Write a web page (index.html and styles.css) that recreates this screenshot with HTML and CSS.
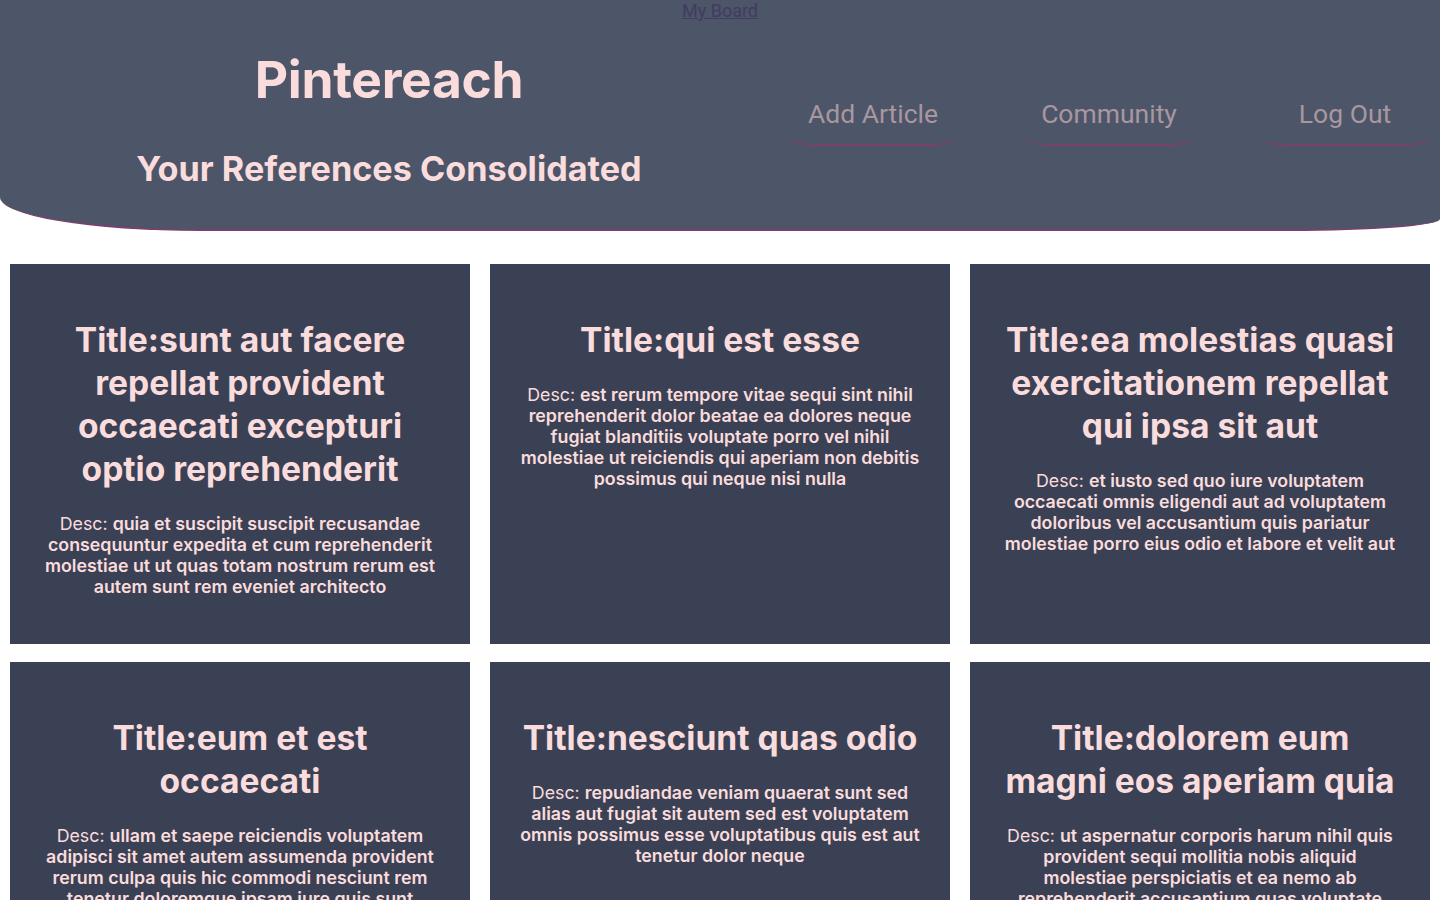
FILE: index.html
```html
<!DOCTYPE html>
<html lang="en">
<head>
<meta charset="utf-8">
<title>Pintereach</title>
<link rel="stylesheet" href="styles.css">
</head>
<body>
<header class="header">
  <a class="board-link" href="#">My Board</a>
  <div class="header-row">
    <div class="brand">
      <h1 class="brand-title">Pintereach</h1>
      <h2 class="brand-sub">Your References Consolidated</h2>
    </div>
    <nav class="nav">
      <a class="nav-link" href="#">Add Article</a>
      <a class="nav-link" href="#">Community</a>
      <a class="nav-link" href="#">Log Out</a>
    </nav>
  </div>
</header>
<main class="grid">
  <article class="card">
    <h3 class="card-title">Title:sunt aut facere repellat provident occaecati excepturi optio reprehenderit</h3>
    <p class="card-desc">Desc: <b>quia et suscipit suscipit recusandae consequuntur expedita et cum reprehenderit molestiae ut ut quas totam nostrum rerum est autem sunt rem eveniet architecto</b></p>
  </article>
  <article class="card">
    <h3 class="card-title">Title:qui est esse</h3>
    <p class="card-desc">Desc: <b>est rerum tempore vitae sequi sint nihil reprehenderit dolor beatae ea dolores neque fugiat blanditiis voluptate porro vel nihil molestiae ut reiciendis qui aperiam non debitis possimus qui neque nisi nulla</b></p>
  </article>
  <article class="card">
    <h3 class="card-title">Title:ea molestias quasi exercitationem repellat qui ipsa sit aut</h3>
    <p class="card-desc">Desc: <b>et iusto sed quo iure voluptatem occaecati omnis eligendi aut ad voluptatem doloribus vel accusantium quis pariatur molestiae porro eius odio et labore et velit aut</b></p>
  </article>
  <article class="card">
    <h3 class="card-title">Title:eum et est occaecati</h3>
    <p class="card-desc">Desc: <b>ullam et saepe reiciendis voluptatem adipisci sit amet autem assumenda provident rerum culpa quis hic commodi nesciunt rem tenetur doloremque ipsam iure quis sunt voluptatem rerum illo velit</b></p>
  </article>
  <article class="card">
    <h3 class="card-title">Title:nesciunt quas odio</h3>
    <p class="card-desc">Desc: <b>repudiandae veniam quaerat sunt sed alias aut fugiat sit autem sed est voluptatem omnis possimus esse voluptatibus quis est aut tenetur dolor neque</b></p>
  </article>
  <article class="card">
    <h3 class="card-title">Title:dolorem eum magni eos aperiam quia</h3>
    <p class="card-desc">Desc: <b>ut aspernatur corporis harum nihil quis provident sequi mollitia nobis aliquid molestiae perspiciatis et ea nemo ab reprehenderit accusantium quas voluptate dolores velit et doloremque molestiae</b></p>
  </article>
</main>
</body>
</html>
```
FILE: styles.css
```css
* { box-sizing: border-box; }

body {
  margin: 0;
  background: #ffffff;
  font-family: Inter, "Noto Sans", sans-serif;
  color: #fadcdc;
}

.header {
  background: #4d5568;
  height: 231px;
  border-bottom: 2px solid #7a3f6e;
  border-bottom-left-radius: 200px 34px;
  border-bottom-right-radius: 150px 12px;
  display: flex;
  flex-direction: column;
  align-items: center;
}

.board-link {
  font-family: Roboto, "Liberation Sans", sans-serif;
  font-size: 18px;
  line-height: 22px;
  color: #403c62;
  text-decoration: underline;
}

.header-row {
  width: 100%;
  display: flex;
  align-items: flex-start;
}

.brand {
  width: 778px;
  text-align: center;
}

.brand-title {
  margin: 26px 0 0;
  font-size: 51.5px;
  line-height: 62px;
  font-weight: 700;
  letter-spacing: -0.3px;
}

.brand-sub {
  margin: 39px 0 0;
  font-size: 34.2px;
  line-height: 40px;
  font-weight: 700;
}

.nav {
  flex: 1;
  display: flex;
  gap: 66px;
  padding: 65px 0 0 10px;
}

.nav-link {
  width: 170px;
  height: 59px;
  padding-top: 12px;
  text-align: center;
  font-family: Roboto, "Liberation Sans", sans-serif;
  font-size: 26.5px;
  line-height: 30px;
  color: #a8979f;
  text-decoration: none;
  border-bottom: 2px solid #7a4170;
  border-radius: 0 0 28px 28px / 0 0 9px 9px;
}

.grid {
  display: grid;
  grid-template-columns: repeat(3, 460px);
  column-gap: 20px;
  row-gap: 18px;
  padding: 33px 10px 10px;
}

.card {
  background: #3a4155;
  padding: 54px 30px 47px;
  text-align: center;
}

.card-title {
  margin: 0 0 23px;
  font-size: 33.6px;
  line-height: 43px;
  font-weight: 700;
}

.card-desc {
  margin: 0;
  font-size: 17.8px;
  line-height: 21px;
  font-weight: 400;
}

.card-desc b {
  font-weight: 600;
}
```
